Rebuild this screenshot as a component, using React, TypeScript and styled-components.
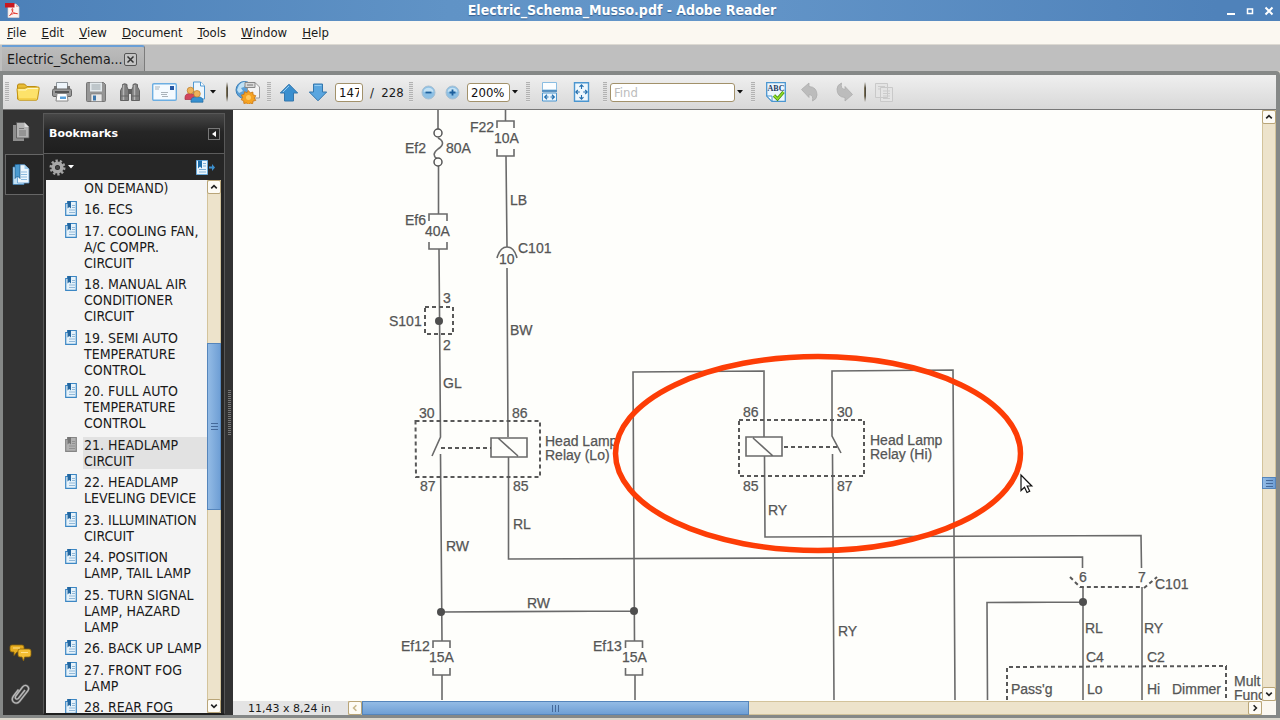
import React from "react";
import styled, { createGlobalStyle, css } from "styled-components";

const UI_FONT = '"DejaVu Sans Condensed", "DejaVu Sans", sans-serif';

const GlobalStyle = createGlobalStyle`
  * { box-sizing: border-box; }
  body { margin: 0; font-family: ${UI_FONT}; font-size: 13px; color: #1a1a1a; }
  button, input { font: inherit; color: inherit; margin: 0; }
  button { padding: 0; border: 0; background: none; }
`;

const Window = styled.div`
  display: flex;
  flex-direction: column;
  height: 100vh;
  overflow: hidden;
  background: #dcd8cd;
`;

/* ---------- title and menu ---------- */

const TitleBar = styled.header`
  display: flex;
  align-items: center;
  height: 21px;
  flex: none;
  padding: 0 4px;
  background: linear-gradient(90deg, #4c80b8, #6093c6 35%, #6496c9 55%, #4f82ba 95%);
`;

const Title = styled.h1`
  flex: 1;
  margin: 0;
  text-align: center;
  font-size: 14px;
  line-height: 18px;
  padding-bottom: 2px;
  font-weight: bold;
  color: #fff;
  text-shadow: 0 1px 1px #38608f;
`;

const WindowButtons = styled.div`
  display: flex;
  gap: 4px;
`;

const WindowButton = styled.button`
  width: 15px;
  height: 20px;
  display: grid;
  place-items: center;
`;

const MenuBar = styled.nav`
  display: flex;
  flex: none;
  gap: 15px;
  height: 24px;
  padding: 0 7px;
  background: #fbf8f1;
  border-bottom: 1px solid #dcd9d2;
`;

const MenuItem = styled.button`
  line-height: 22px;
  &::first-letter { text-decoration: underline; }
`;

const TabStrip = styled.div`
  display: flex;
  flex: none;
  height: 26px;
  padding-left: 2px;
  background: #bfbfbf;
`;

const Tab = styled.div`
  display: flex;
  align-items: center;
  justify-content: space-between;
  width: 143px;
  padding: 0 7px 0 5px;
  border-top: 2px solid #6a9fd6;
  border-right: 1px solid #7c7c7c;
  border-top-right-radius: 3px;
  background: linear-gradient(#bcbcbc, #adadad);
  font-size: 14px;
  line-height: 20px;
`;

const TabClose = styled.button`
  display: grid;
  place-items: center;
  width: 13px;
  height: 13px;
  border: 1px solid #555;
  border-radius: 2px;
  background: #c4c4c4;
`;

const Frame = styled.main`
  display: flex;
  flex-direction: column;
  flex: 1;
  min-height: 0;
  border: 3px solid #858887;
  border-top-width: 4px;
  border-right-width: 4px;
  border-radius: 0 4px 0 0;
  margin-bottom: 2px;
`;

/* ---------- toolbar ---------- */

const Toolbar = styled.div`
  display: flex;
  align-items: center;
  flex: none;
  height: 35px;
  background: linear-gradient(#efefef, #d8d8d8);
  border-bottom: 1px solid #777;
`;

const ToolButton = styled.button<{ $w: number }>`
  display: flex;
  align-items: center;
  justify-content: center;
  gap: 2px;
  width: ${(p) => p.$w}px;
  height: 34px;
  flex: none;
`;

const Grip = styled.span<{ $w: number }>`
  display: flex;
  justify-content: center;
  width: ${(p) => p.$w}px;
  flex: none;
  &::after {
    content: "";
    width: 4px;
    height: 20px;
    background: repeating-linear-gradient(#b2b2b2 0 1px, #e2e2e2 1px 2px);
  }
`;

const Separator = styled.span<{ $w: number }>`
  display: flex;
  justify-content: center;
  width: ${(p) => p.$w}px;
  flex: none;
  &::after {
    content: "";
    width: 2px;
    height: 20px;
    background: linear-gradient(90deg, #8b7f60, #3d3a33);
    mask-image: linear-gradient(transparent, #000 30%, #000 70%, transparent);
  }
`;

const TextBox = styled.input<{ $w: number; $align?: string }>`
  width: ${(p) => p.$w}px;
  height: 19px;
  flex: none;
  padding: 0 3px;
  border: 1px solid #a2916a;
  border-radius: 3px;
  background: #fff;
  text-align: ${(p) => p.$align ?? "left"};
  line-height: 17px;
  color: #111;
  outline: none;
  &::placeholder { color: #bcbcbc; opacity: 1; }
`;

const PageCount = styled.span`
  width: 40px;
  flex: none;
  padding-left: 7px;
  white-space: pre;
`;

/* ---------- left side ---------- */

const Workspace = styled.div`
  display: flex;
  flex: 1;
  min-height: 0;
`;

const Sidebar = styled.aside`
  display: flex;
  flex: none;
  width: 230px;
  background: #333;
`;

const Rail = styled.div`
  display: flex;
  flex-direction: column;
  flex: none;
  width: 40px;
`;

const RailButton = styled.button<{ $h: number; $active?: boolean }>`
  display: grid;
  place-items: center;
  height: ${(p) => p.$h}px;
  flex: none;
  padding-right: 5px;
  ${(p) =>
    p.$active &&
    css`
      margin-left: 2px;
      padding-right: 8px;
      border: 1px solid #666;
      border-right: 0;
      background: #262626;
    `}
`;

const RailSpace = styled.div`
  flex: 1;
`;

const Panel = styled.section`
  display: flex;
  flex-direction: column;
  width: 182px;
  margin-top: 3px;
  background: #262626;
  border: 1px solid #585858;
  border-bottom: 2px solid #1e1e1e;
`;

const PanelHeader = styled.header`
  display: flex;
  align-items: center;
  justify-content: space-between;
  flex: none;
  height: 40px;
  padding: 0 4px 0 5px;
  background: linear-gradient(#474747, #262626 45%, #1e1e1e);
  border-bottom: 1px solid #5c5c5c;
`;

const PanelTitle = styled.h2`
  margin: 0;
  font-family: "DejaVu Sans", sans-serif;
  font-size: 11px;
  color: #fff;
`;

const CollapseButton = styled.button`
  display: grid;
  place-items: center;
  width: 12px;
  height: 12px;
  border: 1px solid #777;
`;

const PanelTools = styled.div`
  display: flex;
  align-items: center;
  justify-content: space-between;
  flex: none;
  height: 26px;
  padding: 0 9px 0 4px;
`;

const ListFrame = styled.div`
  display: flex;
  flex: 1;
  min-height: 0;
  margin: 0 3px 0 2px;
  background: #f4f4f4;
`;

const BookmarkList = styled.ul`
  flex: 1;
  min-width: 0;
  margin: 0;
  padding: 0;
  overflow: hidden;
  list-style: none;
`;

const BookmarkRow = styled.li`
  display: grid;
  grid-template-columns: 13px 1fr;
  column-gap: 5px;
  padding: 0 0 5px 19px;
  &:nth-child(even) { padding-bottom: 6px; }
`;

const BookmarkLink = styled.a<{ $current?: boolean }>`
  padding-left: 1px;
  white-space: pre;
  font-size: 14px;
  line-height: 16px;
  color: #1a1a1a;
  text-decoration: none;
  background: ${(p) => (p.$current ? "#e2e2e2" : "transparent")};
`;

const Splitter = styled.div`
  display: flex;
  align-items: center;
  justify-content: center;
  flex: 1;
  &::after {
    content: "";
    width: 3px;
    height: 45px;
    background: repeating-linear-gradient(#777 0 1px, #333 1px 2px);
  }
`;

/* ---------- scroll bars ---------- */

const Track = styled.div<{ $horizontal?: boolean }>`
  display: flex;
  flex-direction: ${(p) => (p.$horizontal ? "row" : "column")};
  flex: ${(p) => (p.$horizontal ? "1" : "none")};
  ${(p) => (p.$horizontal ? "height: 14px;" : "width: 14px;")}
  background: #ede3cb;
  box-shadow: inset 0 0 0 1px #d3c39b;
`;

const ArrowButton = styled.button`
  display: grid;
  place-items: center;
  width: 14px;
  height: 14px;
  flex: none;
  border: 1px solid #b9a578;
  border-radius: 2px;
  background: #fdfbf5;
`;

const Spacer = styled.span<{ $grow: number }>`
  flex: ${(p) => p.$grow} 1 0;
`;

const Thumb = styled.div<{ $grow: number; $horizontal?: boolean }>`
  display: grid;
  place-items: center;
  flex: ${(p) => p.$grow} 1 0;
  border: 1px solid #5585bb;
  background: linear-gradient(${(p) => (p.$horizontal ? "180deg" : "90deg")}, #93bbe5, #6f9fd5);
  &::after {
    content: "";
    width: 7px;
    height: 7px;
    background: repeating-linear-gradient(
      ${(p) => (p.$horizontal ? "90deg" : "180deg")},
      #44699a 0 1px,
      transparent 1px 3px
    );
  }
`;

/* ---------- document ---------- */

const DocumentArea = styled.section`
  display: flex;
  flex-direction: column;
  flex: 1;
  min-width: 0;
  background: #fefefb;
`;

const DocumentRow = styled.div`
  display: flex;
  flex: 1;
  min-height: 0;
`;

const PageView = styled.div`
  flex: 1;
  min-width: 0;
  overflow: hidden;
`;

const StatusRow = styled.footer`
  display: flex;
  flex: none;
  height: 14px;
  background: #fbf8f1;
`;

const PageSize = styled.span`
  flex: none;
  width: 115px;
  padding-left: 15px;
  line-height: 16px;
  font-family: "DejaVu Sans", sans-serif;
  font-size: 11px;
  background: #e4e4e4;
`;

const Corner = styled.span`
  width: 14px;
  flex: none;
`;

/* ---------- small glyphs ---------- */

const Caret = ({ color = "#111" }: { color?: string }) => (
  <svg width="6" height="4" viewBox="0 0 6 4" aria-hidden><path d="M0 0h6L3 3.6z" fill={color} /></svg>
);

const Chevron = ({ turn, color = "#222" }: { turn: number; color?: string }) => (
  <svg width="8" height="8" viewBox="0 0 8 8" aria-hidden>
    <path d="M1.2 5.4 4 2.6l2.8 2.8" fill="none" stroke={color} strokeWidth="1.6" transform={`rotate(${turn} 4 4)`} />
  </svg>
);

const PdfIcon = () => (
  <svg width="17" height="17" viewBox="0 0 17 17" aria-hidden>
    <path d="M4 2h8l3 3v10.500H4z" fill="#fbf3f1" stroke="#ddd0cf" strokeWidth=".7" />
    <path d="M1 1h9.500v4.500H1z" fill="#ca1820" />
    <path d="M12 2v3h3z" fill="#e9b2ac" />
    <path d="M5.500 13.500c2-1.500 3.500-4 3.300-6.300-.1-1.300-1.200-.8-.9.600.5 2.200 2.700 4.200 5.600 3.900-2.500-1-5.500 0-8 1.800z" fill="none" stroke="#e1352c" strokeWidth=".9" />
  </svg>
);

const FolderIcon = () => (
  <svg width="24" height="20" viewBox="0 0 24 20" aria-hidden>
    <path d="M1.500 17V4q0-2 1.500-2h5.500L11 4.500h8.500Q21 4.500 21 6v10z" fill="#e8bc35" stroke="#b98710" />
    <path d="M1 7.500q-.3-1.300 1-1.300h7L11 5h11q1.500 0 1.200 1.500L21.500 17q-.2 1.200-1.500 1.200H3.500Q2.200 18.200 2 17z" fill="#fde26a" stroke="#c39413" />
    <path d="M2.500 8h7.500l1.800-1.500h10" fill="none" stroke="#fff6c4" />
    <path d="M3 16.800h17.500" stroke="#f3c93f" />
  </svg>
);

const PrinterIcon = () => (
  <svg width="22" height="22" viewBox="0 0 22 22" aria-hidden>
    <path d="M5.500 1.500h11v8h-11z" fill="#eef5fb" stroke="#8a9298" />
    <path d="M3 5h3v4H3zM16 5h3v4h-3z" fill="#777" />
    <rect x="1.500" y="8" width="19" height="7.500" rx="1.500" fill="#9a9a9a" stroke="#666" />
    <path d="M4 11h14" stroke="#444" strokeWidth="1.600" />
    <path d="M6 12.500h10l1 7.500H5z" fill="#fff" stroke="#888" />
    <path d="M9 15.500h6v2.500H9z" fill="#5aa2dc" />
  </svg>
);

const SaveIcon = () => (
  <svg width="22" height="22" viewBox="0 0 22 22" aria-hidden>
    <path d="M1.500 2.500q0-1 1-1h16l2 2v16q0 1-1 1h-17q-1 0-1-1z" fill="#969696" stroke="#757575" />
    <path d="M5 1.500h12v9H5z" fill="#e3e9ec" />
    <path d="M6.500 4h9M6.500 6h9M6.500 8h9" stroke="#9aa4a9" />
    <path d="M6 13h11v7.500H6z" fill="#e9e9e9" stroke="#777" strokeWidth=".6" />
    <path d="M8 14.500h3v5H8z" fill="#3e78ad" />
  </svg>
);

const BinocularsIcon = () => (
  <svg width="22" height="20" viewBox="0 0 22 20" aria-hidden>
    <path d="M3.500 2.500q2-1.500 4.500 0V5l1.500 3v10.500h-8V8.500l2-3.500zM14 2.500q2-1.500 4.500 0V5l2 3.500v10h-8V8L14 5z" fill="#7f7f7f" stroke="#626262" />
    <path d="M9 7h4v5H9z" fill="#606060" />
    <path d="M4.500 3v15M15.500 3v15" stroke="#b5b5b5" strokeWidth="1.500" />
    <path d="M1.500 14h8M12.500 14h8" stroke="#666" />
  </svg>
);

const MailIcon = () => (
  <svg width="25" height="18" viewBox="0 0 25 18" aria-hidden>
    <rect x=".7" y=".7" width="23.600" height="16.600" rx="1.200" fill="#f4faff" stroke="#6caee2" strokeWidth="1.400" />
    <path d="M18 3h4v4h-4z" fill="#2557a5" />
    <path d="M3 4h5M3 6h4M9 9.500h7M9 11.500h6M10 13.500h6" stroke="#a9b2b9" />
  </svg>
);

const PeopleIcon = () => (
  <svg width="24" height="22" viewBox="0 0 24 22" aria-hidden>
    <path d="M9.500 1h7l4 4v13h-11z" fill="#eef6fc" stroke="#4f98d2" />
    <path d="M16.500 1v4h4" fill="#fff" stroke="#4f98d2" />
    <path d="M1 18.500v-2q0-4 5-4t5 4v2z" fill="#d0455d" stroke="#a82c43" strokeWidth=".7" />
    <circle cx="6.500" cy="9.500" r="3.300" fill="#eeb25b" stroke="#bd7d27" strokeWidth=".7" />
    <path d="M7 21.200v-1.500q0-4 6-4t6 4v1.500z" fill="#3790d0" stroke="#20699f" strokeWidth=".7" />
    <circle cx="13" cy="12.800" r="3.300" fill="#eeb25b" stroke="#bd7d27" strokeWidth=".7" />
  </svg>
);

const GlobeIcon = () => (
  <svg width="26" height="24" viewBox="0 0 26 24" aria-hidden>
    <circle cx="9.500" cy="10" r="8.500" fill="#5b9fd6" stroke="#3c80b8" />
    <path d="M4 5q4-5 8-2L9 7 6 8l2 3-4 2-2-3z" fill="#c0e1f5" />
    <path d="M12.500 3h8l4 4v11h-12z" fill="#f4f4f4" stroke="#999" />
    <path d="M10 2.500h10v5H10z" fill="#d9d9d9" stroke="#888" />
    <path d="M12 5h6" stroke="#777" />
    <path d="m13.500 10.500 1.600 2.400 2.700-.9.300 2.800 2.700.9-1.500 2.400 1.500 2.300-2.800.7-.4 2.700-2.500-.8-1.800 2.100-1.700-2.200-2.700.6-.2-2.700-2.500-1.100 1.400-2.300-1.200-2.400 2.700-.6.400-2.700 2.600 1z" fill="#f5a323" stroke="#c8740f" strokeWidth=".8" />
    <circle cx="13.500" cy="17.500" r="2.500" fill="#ffc960" />
  </svg>
);

const ArrowIcon = ({ down }: { down?: boolean }) => (
  <svg width="20" height="19" viewBox="0 0 20 19" aria-hidden>
    <path d="M10 1.200 18.700 10h-4.200v8h-9v-8H1.300z" fill={down ? "#5aa6df" : "#3a8fcf"} stroke="#3577ac" transform={down ? "rotate(180 10 9.500)" : undefined} />
    <path d={down ? "M6.500 2.500h7" : "M10 3 4 9"} stroke="#93cdf3" fill="none" />
  </svg>
);

const ZoomIcon = ({ plus }: { plus?: boolean }) => (
  <svg width="15" height="15" viewBox="0 0 15 15" aria-hidden>
    <circle cx="7.500" cy="7.500" r="6.500" fill="#8ec0e4" stroke="#a6bfd2" />
    <path d="M2.500 6.500a5.200 5.200 0 0 1 10 0q-5 2-10 0z" fill="#c3e1f4" />
    <path d={plus ? "M4.500 7.500h6M7.500 4.500v6" : "M4.500 7.500h6"} stroke="#1c5f9c" strokeWidth="1.800" />
  </svg>
);

const FitWidthIcon = () => (
  <svg width="17" height="20" viewBox="0 0 17 20" aria-hidden>
    <path d="M1.500.5h14v7.500h-14z" fill="#fafdff" stroke="#8abde2" />
    <path d="M1 9h15" stroke="#2f79b7" strokeWidth="1.500" />
    <path d="M1.500 11h14v8h-14z" fill="#ecf6fd" stroke="#4b96d0" />
    <path d="M4 15h3.500M9.500 15H13M6 12.800 3.700 15 6 17.200M11 12.800l2.300 2.200-2.300 2.200" fill="none" stroke="#246fae" strokeWidth="1.200" />
  </svg>
);

const FitPageIcon = () => (
  <svg width="17" height="20" viewBox="0 0 17 20" aria-hidden>
    <path d="M1.500.7h14v18.500h-14z" fill="#eef7fd" stroke="#4b96d0" strokeWidth="1.400" />
    <path d="M8.500 3v4M8.500 13v4M2.800 10h4M10.200 10h4M6.500 4.800l2-2 2 2M6.500 15.200l2 2 2-2M4.800 8l-2 2 2 2M12.200 8l2 2-2 2" fill="none" stroke="#246fae" strokeWidth="1.100" />
  </svg>
);

const SpellIcon = () => (
  <svg width="20" height="20" viewBox="0 0 20 20" aria-hidden>
    <path d="M.7.700h18.600v18.600H6L.700 14z" fill="#edf6fd" stroke="#4b96d0" strokeWidth="1.300" />
    <path d="M.7 14H6v5.300z" fill="#fff" stroke="#4b96d0" />
    <text x="10" y="8.500" textAnchor="middle" fontFamily="Liberation Serif, serif" fontWeight="bold" fontSize="8" fill="#1d3c62">ABC</text>
    <path d="m8 13.500 3.500 3.500 6-7" fill="none" stroke="#3d8a0b" strokeWidth="3.200" />
    <path d="m8 13.500 3.500 3.500 6-7" fill="none" stroke="#93dc2a" strokeWidth="1.800" />
  </svg>
);

const UndoIcon = ({ redo }: { redo?: boolean }) => (
  <svg width="19" height="20" viewBox="0 0 19 20" aria-hidden>
    <path
      d="M1.500 7.500 9 1v3.500q8 .5 8 8.500 0 4-4.500 6 1.200-6-3.500-6.500v3z"
      fill="#bcbcbc" stroke="#adadad" strokeWidth=".8"
      transform={redo ? "rotate(180 9.500 10)" : undefined}
    />
  </svg>
);

const CopyIcon = () => (
  <svg width="20" height="21" viewBox="0 0 20 21" aria-hidden>
    <path d="M1.500 1.500h12v14h-12zM6.500 5.500h12v14h-12z" fill="#e4e4e4" stroke="#c9c9c9" />
    <path d="M4 4.500h7M4 7h2M9 9h7M9 11.500h7M9 14h7M9 16.500h7" stroke="#cbcbcb" />
  </svg>
);

const PagesIcon = () => (
  <svg width="18" height="20" viewBox="0 0 18 20" aria-hidden>
    <path d="M1 3h11v16H1z" fill="#8e8e8e" />
    <path d="M4.500.500h8L17 5v11H4.500z" fill="#b3b3b3" stroke="#555" strokeWidth=".8" />
    <path d="M7 6.500h5M7 9h7M7 11h7M7 13h7" stroke="#777" />
    <path d="M12.500.5V5H17z" fill="#ddd" />
  </svg>
);

const BookmarksIcon = () => (
  <svg width="18" height="21" viewBox="0 0 18 21" aria-hidden>
    <path d="M1 3h11v17.500H1z" fill="#c2e0f4" stroke="#3a83bd" strokeWidth=".7" />
    <path d="M5.500.700h7L17 5v14H5.500z" fill="#edf6fc" stroke="#5a9bd0" strokeWidth=".8" />
    <path d="M9 8h6M9 10.500h6M9 13h6M9 15.500h6" stroke="#8bb9dd" />
    <path d="M3 .5h5v14L5.500 12 3 14.500z" fill="#4a9ad0" stroke="#175a8e" strokeWidth=".7" />
    <path d="M12.500.7V5H17z" fill="#9ccbec" />
  </svg>
);

const CommentsIcon = () => (
  <svg width="23" height="18" viewBox="0 0 23 18" aria-hidden>
    <path d="M3 1h10q2 0 2 2v3q0 2-2 2H8l-3 3.500V8H3Q1 8 1 6V3q0-2 2-2z" fill="#e7ad20" stroke="#8d6409" strokeWidth=".8" />
    <path d="M11 5h9q2 0 2 2v4q0 2-2 2h-4.500l-1 4-1.500-4h-2q-2 0-2-2V7q0-2 2-2z" fill="#f2bd33" stroke="#8d6409" strokeWidth=".8" />
    <path d="M4 4h7M12 8.500h7" stroke="#ffe08b" />
  </svg>
);

const ClipIcon = () => (
  <svg width="20" height="22" viewBox="0 0 20 22" aria-hidden>
    <path d="m14 7-6.500 8.300q-1.400 1.400-2.600.4-1.200-1.200-.1-2.700L11.500 4q2.500-2.800 5-.8 2.200 2.200.2 4.800L8.500 18.500q-3 3-6 .5-2.500-2.500 0-6L7.500 6.500" fill="none" stroke="#555" strokeWidth="2.600" />
    <path d="m14 7-6.500 8.300q-1.400 1.400-2.600.4-1.200-1.200-.1-2.700L11.500 4q2.500-2.800 5-.8 2.200 2.200.2 4.800L8.500 18.500q-3 3-6 .5-2.500-2.500 0-6L7.500 6.500" fill="none" stroke="#b8b8b8" strokeWidth="1.400" />
  </svg>
);

const GearIcon = () => (
  <svg width="17" height="17" viewBox="0 0 17 17" aria-hidden>
    <circle cx="8.500" cy="8.500" r="6.700" fill="none" stroke="#a4a4a4" strokeWidth="2.600" strokeDasharray="2.300 1.900" />
    <circle cx="8.500" cy="8.500" r="4.300" fill="none" stroke="#a8a8a8" strokeWidth="3.600" />
    <circle cx="8.500" cy="8.500" r="1.700" fill="#444" />
  </svg>
);

const NewBookmarkIcon = () => (
  <svg width="19" height="15" viewBox="0 0 19 15" aria-hidden>
    <path d="M.5.500h11v14H.5z" fill="#eaf5fc" stroke="#68a9da" />
    <path d="M2 .5h4v8L4 6.500l-2 2z" fill="#1c6ca8" />
    <path d="M7 3.500h3M7 6h3M3 9.500h7M3 12h7" stroke="#7fb1d9" />
    <path d="M13 6.500h3V4l3 3.500-3 3.500V8.500h-3z" fill="#3c8fce" />
  </svg>
);

const BookmarkIcon = ({ gray }: { gray?: boolean }) => {
  const [edge, paper, ribbon, line] = gray
    ? ["#858585", "#b1b1b1", "#747474", "#909090"]
    : ["#3c87c4", "#e6f2fa", "#23669f", "#91b8d8"];
  return (
    <svg width="12" height="15" viewBox="0 0 12 15" aria-hidden>
      <path d="M.7 2.500h2v-2h8.600v13.800H.700z" fill={paper} stroke={edge} strokeWidth="1.200" />
      <path d="M2.500 0h3.500v7.500L4.200 6 2.500 7.500z" fill={ribbon} />
      <path d="M7 4.500h3M7 6.500h3M4 9h6M4 11.500h6" stroke={line} />
    </svg>
  );
};

/* ---------- schematic ---------- */

const Drawing = styled.svg`
  display: block;
  font-family: "Liberation Sans", Arial, sans-serif;
  font-size: 14px;
  fill: #555;
`;

const Wire = styled.path<{ $dashed?: boolean }>`
  fill: none;
  stroke: ${(p) => (p.$dashed ? "#585858" : "#6a6a6a")};
  stroke-width: ${(p) => (p.$dashed ? "2px" : "1.600px")};
  stroke-dasharray: ${(p) => (p.$dashed ? "4 3" : "none")};
`;

const wires = [
  "M438 110v19M438 138c6 3 6 7 0 11-5 4-5 7-1 10M438.500 166v48",
  "M429 221v-7h18v7M429 242v7h18v-7M439 249l1.500 188-8.500 19",
  "M505.500 110v11M497 128v-7h17v7M497 149v7h17v-7M506 156l1 91",
  "M497 258q3-11 10-11t10 11M507 268l1 169M491 438h36v19h-36zM498 438l20 18",
  "M508.500 457v102l574-2v11M440.500 454l1.500 187M433 648v-7h17v7M433 668v7h17v-7M442 675v25",
  "M441 612l193-1M764 437v-66l-131 1 1.500 269M625.500 648v-7h17v7M625.500 668v7h17v-7M635 675v25",
  "M746 437h36v19h-36zM753 438l20 18M764.500 456l.5 81 376-1.500.5 32.500",
  "M841 453l-9-17v-65l121-1 2 330M832.500 454l1.500 246",
  "M1083 587v113M1083 602l-96 .5.500 97.500M1142 587v113",
];

const dashedWires = [
  "M425 307h28v27h-28z",
  "M415.500 421H540v56H416zM441 448h50",
  "M739 420h125v56H739zM784 447h53",
  "M1070 577l10 10h62M1144 588l13-11",
  "M1007 700v-33l219-1v34",
];

const circles: [number, number][] = [[438, 133], [438, 162]];
const dots: [number, number][] = [[439, 321], [441, 612], [634, 611], [1083, 602]];

const labels: [string, number, number][] = [
  ["F22", 470, 132], ["10A", 494, 143], ["Ef2", 405, 153], ["80A", 446, 153], ["LB", 510, 205],
  ["Ef6", 405, 225], ["40A", 425, 236], ["C101", 518, 253], ["10", 499, 264], ["3", 443, 303],
  ["S101", 389, 326], ["2", 443, 350], ["BW", 510, 335], ["GL", 443, 388], ["30", 419, 418],
  ["86", 512, 418], ["Head Lamp", 545, 446], ["Relay (Lo)", 545, 460], ["87", 420, 491],
  ["85", 513, 491], ["RL", 513, 529], ["RW", 446, 551], ["RW", 527, 608], ["Ef12", 401, 651],
  ["15A", 429, 662], ["Ef13", 593, 651], ["15A", 622, 662], ["86", 743, 417], ["30", 837, 417],
  ["Head Lamp", 870, 445], ["Relay (Hi)", 870, 459], ["85", 743, 491], ["87", 837, 491],
  ["RY", 768, 515], ["RY", 838, 636], ["6", 1079, 582], ["7", 1138, 582], ["C101", 1155, 589],
  ["RL", 1085, 633], ["RY", 1144, 633], ["C4", 1086, 662], ["C2", 1147, 662], ["Pass'g", 1011, 694],
  ["Lo", 1087, 694], ["Hi", 1147, 694], ["Dimmer", 1172, 694], ["Mult", 1234, 686], ["Func", 1234, 700],
];

const Schematic = () => (
  <Drawing width="1029" height="590" viewBox="233 110 1029 590" role="img" aria-label="Head lamp circuit">
    {wires.map((d) => <Wire key={d} d={d} />)}
    {dashedWires.map((d) => <Wire key={d} d={d} $dashed />)}
    {circles.map(([x, y]) => <circle key={y} cx={x} cy={y} r="4" fill="#fefefb" stroke="#555" strokeWidth="1.500" />)}
    {dots.map(([x, y]) => <circle key={x} cx={x} cy={y} r="4" fill="#4e4e4e" />)}
    {labels.map(([text, x, y]) => (
      <text key={`${text}-${x}-${y}`} x={x} y={y} stroke="#555" strokeWidth=".25">{text}</text>
    ))}
    <ellipse cx="818" cy="453.500" rx="202.500" ry="97" fill="none" stroke="#fd3d06" strokeWidth="5.500" />
    <path d="M1021 475v15.500l3.500-3.300 2.500 5.300 2.700-1.300-2.500-5.200h4.600z" fill="#fff" stroke="#111" strokeWidth="1.200" />
  </Drawing>
);

/* ---------- page ---------- */

const menus = ["File", "Edit", "View", "Document", "Tools", "Window", "Help"];

const bookmarks = [
  "ON DEMAND)",
  "16. ECS",
  "17. COOLING FAN,\nA/C COMPR.\nCIRCUIT",
  "18. MANUAL AIR\nCONDITIONER\nCIRCUIT",
  "19. SEMI AUTO\nTEMPERATURE\nCONTROL",
  "20. FULL AUTO\nTEMPERATURE\nCONTROL",
  "21. HEADLAMP\nCIRCUIT",
  "22. HEADLAMP\nLEVELING DEVICE",
  "23. ILLUMINATION\nCIRCUIT",
  "24. POSITION\nLAMP, TAIL LAMP",
  "25. TURN SIGNAL\nLAMP, HAZARD\nLAMP",
  "26. BACK UP LAMP",
  "27. FRONT FOG\nLAMP",
  "28. REAR FOG",
];

export default function App() {
  return (
    <Window>
      <GlobalStyle />
      <TitleBar>
        <PdfIcon />
        <Title>Electric_Schema_Musso.pdf - Adobe Reader</Title>
        <WindowButtons>
          <WindowButton aria-label="Minimize">
            <svg width="10" height="10"><path d="M1 8h8" stroke="#fff" strokeWidth="2" /></svg>
          </WindowButton>
          <WindowButton aria-label="Maximize">
            <svg width="10" height="10"><path d="M2.500 3h5v4.500h-5z" fill="none" stroke="#fff" strokeWidth="1.500" /></svg>
          </WindowButton>
          <WindowButton aria-label="Close">
            <svg width="10" height="10"><path d="m1.500 1.500 7 7m0-7-7 7" stroke="#fff" strokeWidth="2" /></svg>
          </WindowButton>
        </WindowButtons>
      </TitleBar>
      <MenuBar>
        {menus.map((m) => <MenuItem key={m}>{m}</MenuItem>)}
      </MenuBar>
      <TabStrip>
        <Tab>
          <span>Electric_Schema...</span>
          <TabClose aria-label="Close tab">
            <svg width="9" height="9"><path d="m1.500 1.500 6 6m0-6-6 6" stroke="#333" strokeWidth="1.500" /></svg>
          </TabClose>
        </Tab>
      </TabStrip>
      <Frame>
        <Toolbar>
          <Grip $w={8} />
          <ToolButton $w={34} aria-label="Open"><FolderIcon /></ToolButton>
          <ToolButton $w={34} aria-label="Print"><PrinterIcon /></ToolButton>
          <ToolButton $w={34} aria-label="Save"><SaveIcon /></ToolButton>
          <ToolButton $w={34} aria-label="Search"><BinocularsIcon /></ToolButton>
          <ToolButton $w={34} aria-label="Email"><MailIcon /></ToolButton>
          <ToolButton $w={38} aria-label="Collaborate"><PeopleIcon /><Caret /></ToolButton>
          <Separator $w={16} />
          <ToolButton $w={26} aria-label="Create PDF online"><GlobeIcon /></ToolButton>
          <Grip $w={16} />
          <ToolButton $w={24} aria-label="Previous page"><ArrowIcon /></ToolButton>
          <ToolButton $w={34} aria-label="Next page"><ArrowIcon down /></ToolButton>
          <TextBox $w={28} $align="right" aria-label="Page number" defaultValue="147" />
          <PageCount>/  228</PageCount>
          <Grip $w={16} />
          <ToolButton $w={18} aria-label="Zoom out"><ZoomIcon /></ToolButton>
          <ToolButton $w={30} aria-label="Zoom in"><ZoomIcon plus /></ToolButton>
          <TextBox $w={43} aria-label="Zoom level" defaultValue="200%" />
          <ToolButton $w={10} aria-label="Zoom levels"><Caret /></ToolButton>
          <Grip $w={16} />
          <ToolButton $w={26} aria-label="Fit width"><FitWidthIcon /></ToolButton>
          <ToolButton $w={38} aria-label="Fit page"><FitPageIcon /></ToolButton>
          <Grip $w={10} />
          <TextBox $w={125} aria-label="Find" placeholder="Find" />
          <ToolButton $w={10} aria-label="Find options"><Caret /></ToolButton>
          <Grip $w={16} />
          <ToolButton $w={30} aria-label="Check spelling"><SpellIcon /></ToolButton>
          <ToolButton $w={36} aria-label="Undo"><UndoIcon /></ToolButton>
          <ToolButton $w={34} aria-label="Redo"><UndoIcon redo /></ToolButton>
          <Separator $w={8} />
          <ToolButton $w={30} aria-label="Copy"><CopyIcon /></ToolButton>
        </Toolbar>
        <Workspace>
          <Sidebar>
            <Rail>
              <RailButton $h={44} aria-label="Pages"><PagesIcon /></RailButton>
              <RailButton $h={41} $active aria-label="Bookmarks"><BookmarksIcon /></RailButton>
              <RailSpace />
              <RailButton $h={40} aria-label="Comments"><CommentsIcon /></RailButton>
              <RailButton $h={42} aria-label="Attachments"><ClipIcon /></RailButton>
            </Rail>
            <Panel>
              <PanelHeader>
                <PanelTitle>Bookmarks</PanelTitle>
                <CollapseButton aria-label="Collapse panel">
                  <svg width="4" height="6"><path d="M4 0v6L0 3z" fill="#fff" /></svg>
                </CollapseButton>
              </PanelHeader>
              <PanelTools>
                <ToolButton $w={26} aria-label="Options"><GearIcon /><Caret color="#fff" /></ToolButton>
                <ToolButton $w={19} aria-label="New bookmark"><NewBookmarkIcon /></ToolButton>
              </PanelTools>
              <ListFrame>
                <BookmarkList>
                  {bookmarks.map((b, i) => (
                    <BookmarkRow key={b}>
                      {i === 0 ? <span /> : <BookmarkIcon gray={i === 6} />}
                      <BookmarkLink href="#" $current={i === 6}>{b}</BookmarkLink>
                    </BookmarkRow>
                  ))}
                </BookmarkList>
                <Track>
                  <ArrowButton aria-label="Scroll up"><Chevron turn={0} /></ArrowButton>
                  <Spacer $grow={150} />
                  <Thumb $grow={165} />
                  <Spacer $grow={190} />
                  <ArrowButton aria-label="Scroll down"><Chevron turn={180} /></ArrowButton>
                </Track>
              </ListFrame>
            </Panel>
            <Splitter />
          </Sidebar>
          <DocumentArea>
            <DocumentRow>
              <PageView><Schematic /></PageView>
              <Track>
                <ArrowButton aria-label="Scroll up"><Chevron turn={0} /></ArrowButton>
                <Spacer $grow={354} />
                <Thumb $grow={10} />
                <Spacer $grow={198} />
                <ArrowButton aria-label="Scroll down"><Chevron turn={180} /></ArrowButton>
              </Track>
            </DocumentRow>
            <StatusRow>
              <PageSize>11,43 x 8,24 in</PageSize>
              <Track $horizontal>
                <ArrowButton aria-label="Scroll left"><Chevron turn={-90} color="#c9b88e" /></ArrowButton>
                <Spacer $grow={0} />
                <Thumb $grow={386} $horizontal />
                <Spacer $grow={500} />
                <ArrowButton aria-label="Scroll right"><Chevron turn={90} /></ArrowButton>
              </Track>
              <Corner />
            </StatusRow>
          </DocumentArea>
        </Workspace>
      </Frame>
    </Window>
  );
}
